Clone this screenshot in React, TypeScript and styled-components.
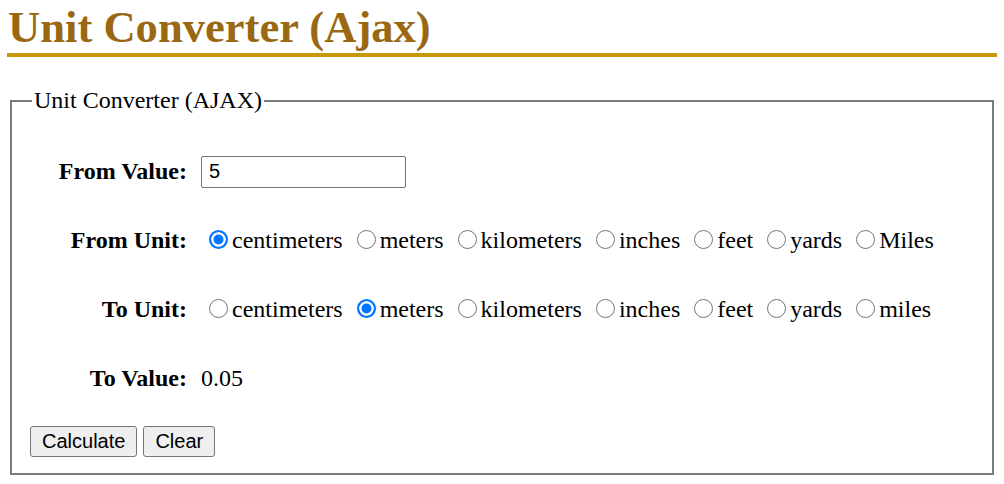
import React, { useState } from "react";
import styled, { createGlobalStyle } from "styled-components";

const GlobalStyle = createGlobalStyle`
  html, body { margin: 0; padding: 0; background: #ffffff; }
  body {
    font-family: "Liberation Serif", "Times New Roman", serif;
    font-size: 24px;
    color: #000000;
  }
`;

const Page = styled.div`
  padding: 1px 8px 0 8px;
`;

const Title = styled.h1`
  margin: 0 -1px 30px -1px;
  padding: 0 1px;
  font-size: 44.6px;
  font-weight: bold;
  line-height: normal;
  color: #9a6812;
  border-bottom: 4px solid #c8970b;
`;

const Fieldset = styled.fieldset`
  margin: 0 2px;
  padding: 8.4px 18px 16px 18px;
  border: 2px solid #7a7a7a;
  font-size: 24px;
`;

const Legend = styled.legend`
  padding: 0 2px;
  font-size: 24px;
  margin-left: 2px;
`;

const Grid = styled.div`
  display: grid;
  grid-template-columns: 157px 1fr;
  grid-auto-rows: 69px;
  column-gap: 14px;
  padding-top: 15px;
`;

const Label = styled.label`
  display: flex;
  align-items: center;
  justify-content: flex-end;
  font-weight: bold;
  white-space: nowrap;
`;

const Cell = styled.div`
  display: flex;
  align-items: center;
  white-space: nowrap;
`;

const TextInput = styled.input`
  box-sizing: border-box;
  width: 205px;
  height: 32px;
  margin: 0;
  padding: 0 7px;
  border: 1px solid #767676;
  border-radius: 2px;
  font-family: "Liberation Sans", Arial, sans-serif;
  font-size: 20px;
  color: #000;
  outline: none;
`;

const Option = styled.label`
  display: inline-flex;
  align-items: center;
  margin-right: 6px;
`;

const Radio = styled.input`
  appearance: none;
  -webkit-appearance: none;
  box-sizing: border-box;
  width: 19px;
  height: 19px;
  margin: 0 4px 0 8px;
  border-radius: 50%;
  border: 1px solid #767676;
  background: #ffffff;
  position: relative;
  top: -1px;
  &:checked {
    border: 2px solid #0075ff;
    background: #0075ff;
    box-shadow: inset 0 0 0 2.5px #ffffff;
  }
`;

const Value = styled.span`
  font-size: 24px;
`;

const Buttons = styled.div`
  display: flex;
  gap: 6px;
  margin-top: 13px;
`;

const Button = styled.button`
  box-sizing: border-box;
  height: 31px;
  padding: 0 11px;
  margin: 0;
  background: #efefef;
  border: 1px solid #767676;
  border-radius: 3px;
  font-family: "Liberation Sans", Arial, sans-serif;
  font-size: 20px;
  color: #000;
  cursor: pointer;
`;

const fromUnits = ["centimeters", "meters", "kilometers", "inches", "feet", "yards", "Miles"];
const toUnits = ["centimeters", "meters", "kilometers", "inches", "feet", "yards", "miles"];

export default function App() {
  const [value, setValue] = useState("5");
  const [fromUnit, setFromUnit] = useState("centimeters");
  const [toUnit, setToUnit] = useState("meters");

  return (
    <Page>
      <GlobalStyle />
      <Title>Unit Converter (Ajax)</Title>
      <Fieldset>
        <Legend>Unit Converter (AJAX)</Legend>
        <Grid>
          <Label htmlFor="fromValue">From Value:</Label>
          <Cell>
            <TextInput id="fromValue" value={value} onChange={(e) => setValue(e.target.value)} />
          </Cell>
          <Label>From Unit:</Label>
          <Cell>
            {fromUnits.map((u) => (
              <Option key={u}>
                <Radio
                  type="radio"
                  name="fromUnit"
                  checked={fromUnit.toLowerCase() === u.toLowerCase()}
                  onChange={() => setFromUnit(u)}
                />
                {u}
              </Option>
            ))}
          </Cell>
          <Label>To Unit:</Label>
          <Cell>
            {toUnits.map((u) => (
              <Option key={u}>
                <Radio
                  type="radio"
                  name="toUnit"
                  checked={toUnit === u}
                  onChange={() => setToUnit(u)}
                />
                {u}
              </Option>
            ))}
          </Cell>
          <Label>To Value:</Label>
          <Cell>
            <Value>0.05</Value>
          </Cell>
        </Grid>
        <Buttons>
          <Button type="button">Calculate</Button>
          <Button type="button">Clear</Button>
        </Buttons>
      </Fieldset>
    </Page>
  );
}
